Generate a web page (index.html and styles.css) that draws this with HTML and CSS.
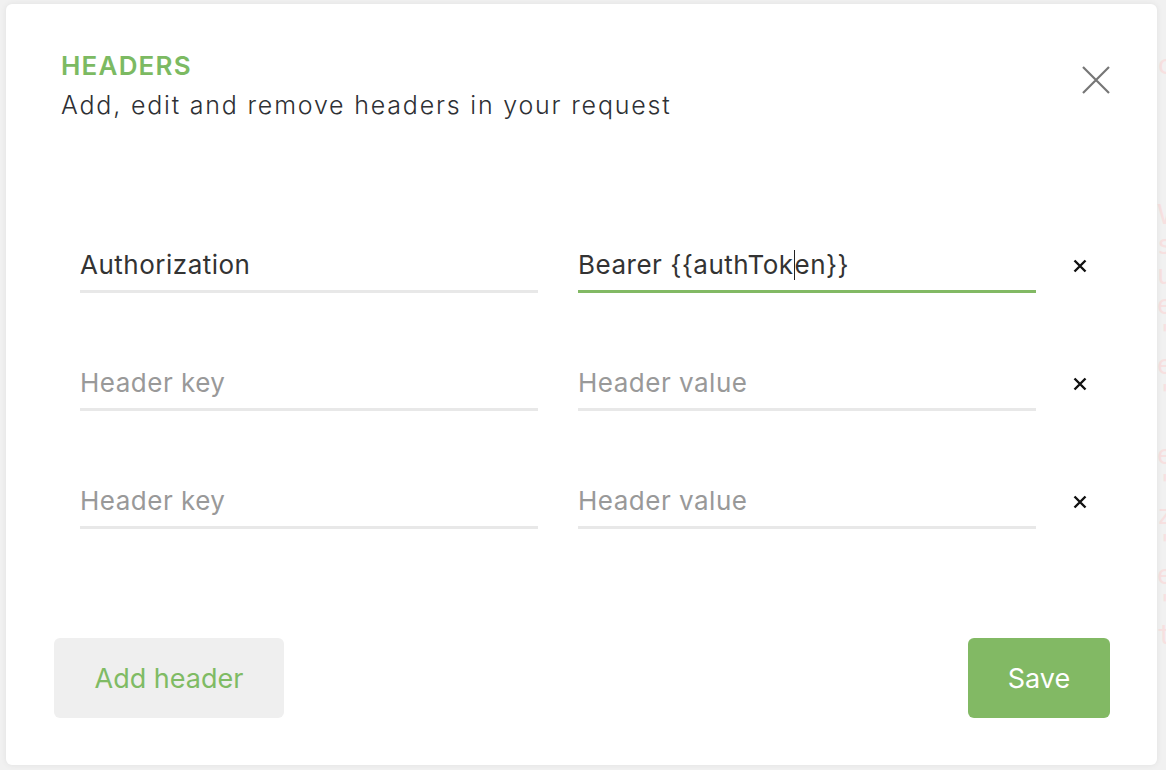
FILE: index.html
```html
<!DOCTYPE html>
<html lang="en">
<head>
<meta charset="utf-8">
<title>Headers</title>
<link rel="stylesheet" href="styles.css">
</head>
<body>
<pre class="backdrop-code">c




Vj
se
u
e
'V
e
'U

e
'V
ze
'Z
e
'V
th</pre>
<div class="modal">
  <div class="modal-header">
    <div class="titles">
      <h2 class="title">HEADERS</h2>
      <p class="subtitle">Add, edit and remove headers in your request</p>
    </div>
    <button class="close" aria-label="Close">
      <svg width="30" height="30" viewBox="0 0 30 30"><path d="M2 2 L28 28 M28 2 L2 28" stroke="#767676" stroke-width="2.2" fill="none"/></svg>
    </button>
  </div>
  <div class="rows">
    <div class="row">
      <div class="field"><span class="value">Authorization</span></div>
      <div class="field focused"><span class="value">Bearer {{authTok<span class="caret"></span>en}}</span></div>
      <button class="del" aria-label="Remove"><svg width="14" height="14" viewBox="0 0 14 14"><path d="M1.5 1.5 L12.5 12.5 M12.5 1.5 L1.5 12.5" stroke="#111" stroke-width="2.4" fill="none"/></svg></button>
    </div>
    <div class="row">
      <div class="field"><span class="placeholder">Header key</span></div>
      <div class="field"><span class="placeholder">Header value</span></div>
      <button class="del" aria-label="Remove"><svg width="14" height="14" viewBox="0 0 14 14"><path d="M1.5 1.5 L12.5 12.5 M12.5 1.5 L1.5 12.5" stroke="#111" stroke-width="2.4" fill="none"/></svg></button>
    </div>
    <div class="row">
      <div class="field"><span class="placeholder">Header key</span></div>
      <div class="field"><span class="placeholder">Header value</span></div>
      <button class="del" aria-label="Remove"><svg width="14" height="14" viewBox="0 0 14 14"><path d="M1.5 1.5 L12.5 12.5 M12.5 1.5 L1.5 12.5" stroke="#111" stroke-width="2.4" fill="none"/></svg></button>
    </div>
  </div>
  <div class="footer">
    <button class="btn btn-secondary">Add header</button>
    <button class="btn btn-primary">Save</button>
  </div>
</div>
</body>
</html>
```

FILE: styles.css
```css
html, body {
  margin: 0;
  padding: 0;
}
body {
  width: 1166px;
  height: 770px;
  overflow: hidden;
  background: #f1f1f1;
  position: relative;
  font-family: Inter, "Liberation Sans", sans-serif;
}
.backdrop-code {
  position: absolute;
  left: 1157px;
  top: 50px;
  margin: 0;
  font-family: "DejaVu Sans Mono", monospace;
  font-size: 26px;
  line-height: 30px;
  color: #f7e0e0;
}
.modal {
  position: relative;
  margin: 4px 0 0 6px;
  width: 1151px;
  height: 761px;
  box-sizing: border-box;
  background: #fff;
  border-radius: 6px;
  box-shadow: 0 0 6px rgba(0,0,0,0.07);
  display: flex;
  flex-direction: column;
  padding: 0 47px 47px 48px;
}
.modal-header {
  display: flex;
  justify-content: space-between;
  align-items: flex-start;
  padding: 47px 0 0 7px;
}
.title {
  margin: 0;
  font-family: Inter, sans-serif;
  font-weight: 600;
  font-size: 26px;
  line-height: 30px;
  color: #7cba62;
  letter-spacing: 1.2px;
}
.subtitle {
  margin: 8px 0 0;
  font-family: Inter, sans-serif;
  font-weight: 300;
  font-size: 25px;
  line-height: 32px;
  color: #2e3034;
  letter-spacing: 1.8px;
}
.close {
  border: 0;
  background: none;
  padding: 0;
  margin: 14px -1px 0 0;
  width: 30px;
  height: 30px;
  display: block;
}
.close svg { display: block; }
.rows {
  margin-top: 116px;
  padding-left: 26px;
  display: flex;
  flex-direction: column;
  gap: 62px;
}
.row {
  display: flex;
  align-items: flex-end;
  gap: 40px;
}
.field {
  flex: 0 0 458px;
  width: 458px;
  height: 56px;
  box-sizing: border-box;
  border-bottom: 3px solid #e8e8e8;
  font-size: 26px;
  line-height: 30px;
  letter-spacing: 0.5px;
  padding-top: 13px;
  white-space: nowrap;
}
.field.focused {
  border-bottom-color: #82b964;
}
.value {
  color: #333;
}
.placeholder {
  color: #999;
}
.caret {
  display: inline-block;
  width: 1px;
  height: 30px;
  background: #222;
  vertical-align: -6px;
}
.del {
  flex: 0 0 88px;
  border: 0;
  background: none;
  padding: 0;
  width: 88px;
  margin-left: -40px;
  height: 56px;
  display: flex;
  align-items: center;
  justify-content: center;
  padding-top: 2px;
  box-sizing: border-box;
}
.del svg { display: block; }
.footer {
  margin-top: auto;
  display: flex;
  justify-content: space-between;
}
.btn {
  border: 0;
  height: 80px;
  border-radius: 6px;
  font-family: Inter, sans-serif;
  font-size: 27px;
  padding: 0;
}
.btn-secondary {
  width: 230px;
  background: #efefef;
  color: #7fbb64;
}
.btn-primary {
  width: 142px;
  background: #82b964;
  color: #fff;
}
```
